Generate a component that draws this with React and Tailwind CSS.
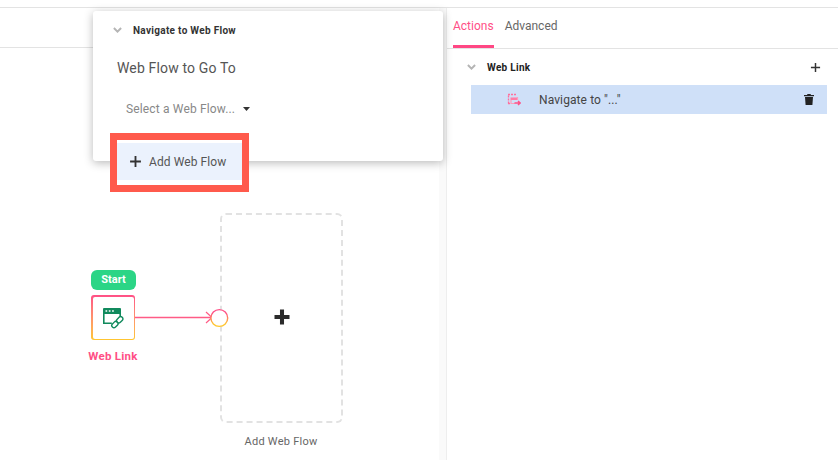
import React from "react";

const Chevron = ({ className }) => (
  <svg viewBox="0 0 10 6" className={className} fill="none" stroke="#b5b5b5" strokeWidth="2.2"><path d="M1 .8l4 4 4-4" /></svg>
);

const Plus = ({ size = 12, w = 2, color = "#333" }) => (
  <svg width={size} height={size} viewBox="0 0 12 12"><path d="M6 1v10M1 6h10" stroke={color} strokeWidth={w} fill="none" /></svg>
);

export default function App() {
  return (
    <div className="w-[838px] h-[460px] bg-white overflow-hidden flex flex-col text-[12px] text-[#555]" style={{ fontFamily: "Roboto, Arial, sans-serif" }}>
      <div className="h-[8px] shrink-0 border-b border-[#e3e3e3]" />
      <div className="flex flex-1 min-h-0">
        <div className="relative w-[439px] shrink-0">
          <div className="h-[40px] border-b border-[#e3e3e3]" />

          {/* popup */}
          <div className="absolute left-[93px] top-[3px] w-[350px] h-[150px] bg-white rounded-[3px] shadow-[0_2px_10px_rgba(0,0,0,0.28)] z-10">
            <div className="flex items-center h-[38px] pl-[20px]">
              <Chevron className="w-[9px] h-[6px]" />
              <span className="ml-[11px] font-bold text-[10px] text-[#333] tracking-[0.3px]">Navigate to Web Flow</span>
            </div>
            <div className="pl-[24px] mt-[9px] text-[14px] leading-[20px] text-[#555] tracking-[0.15px]">Web Flow to Go To</div>
            <div className="pl-[33px] mt-[21px] flex items-center text-[12px] leading-[20px] text-[#888] tracking-[0.15px]">
              Select a Web Flow...
              <svg width="7" height="4" viewBox="0 0 7 4" className="ml-[8px]"><path d="M0 0h7L3.5 4z" fill="#333" /></svg>
            </div>
          </div>

          {/* highlighted button */}
          <div className="absolute left-[110px] top-[125px] w-[139px] h-[59px] border-[7px] border-[#ff5a4c] bg-white z-20 pt-[3px]">
            <div className="h-[37px] bg-[#ebf2fd] flex items-center pl-[12px] text-[12px] text-[#555] tracking-[0.08px]">
              <Plus size={13} w={1.7} />
              <span className="ml-[7px]">Add Web Flow</span>
            </div>
          </div>

          {/* canvas nodes */}
          <div className="absolute left-[91px] top-[262px] w-[45px] h-[20px] rounded-[6px] bg-[#2bd586] text-white font-bold text-[11px] flex items-center justify-center">Start</div>
          <div className="absolute left-[91px] top-[287px] w-[44px] h-[45px] rounded-[3px] p-[1.5px] bg-gradient-to-b from-[#ff4f86] to-[#ffc62e]">
            <div className="w-full h-full bg-white rounded-[2px] flex items-center justify-center">
              <svg width="22" height="22" viewBox="0 0 22 22" fill="none">
                <path d="M1 2a1 1 0 0 1 1-1h16a1 1 0 0 1 1 1v5H1z" fill="#118a5d" />
                <path d="M1.8 6v10.2h8M18.2 6v4" stroke="#118a5d" strokeWidth="1.6" />
                <path d="M3.5 4h1.7M6.8 4h1.7M10.1 4h1.7" stroke="#fff" strokeWidth="1.6" />
                <g stroke="#118a5d" strokeWidth="1.4" fill="none">
                  <rect x="9.4" y="15.4" width="7" height="4.4" rx="2.2" transform="rotate(-45 12.9 17.6)" />
                  <rect x="14.2" y="10.6" width="7" height="4.4" rx="2.2" transform="rotate(-45 17.7 12.8)" />
                </g>
              </svg>
            </div>
          </div>
          <div className="absolute left-[73px] top-[340px] w-[80px] text-center font-bold text-[11.5px] leading-[17px] text-[#ff4f86] tracking-[0.25px]">Web Link</div>

          <svg className="absolute left-[135px] top-[300px] z-[1]" width="80" height="20" viewBox="0 0 80 20" fill="none">
            <path d="M0 9.5h76" stroke="#ff5c86" strokeWidth="1.6" />
            <path d="M71 4l6 5.5-6 5.5" stroke="#ff5c86" strokeWidth="1.2" />
          </svg>

          <div className="absolute left-[220px] top-[205px] w-[123px] h-[210px] rounded-[6px] border-2 border-dashed border-[#e2e2e2] flex items-center justify-center pb-[3px]">
            <Plus size={18} w={2.7} color="#2b2b2b" />
          </div>
          <svg className="absolute left-[209px] top-[300px] z-[2]" width="20" height="20" viewBox="0 0 20 20" fill="none">
            <defs>
              <linearGradient id="ring" x1="0" y1="0" x2="0" y2="1">
                <stop offset="0.2" stopColor="#ff4f86" />
                <stop offset="0.85" stopColor="#ffc62e" />
              </linearGradient>
            </defs>
            <circle cx="10.3" cy="10" r="8.4" fill="#fff" stroke="url(#ring)" strokeWidth="1.4" />
          </svg>
          <div className="absolute left-[201px] top-[425px] w-[160px] text-center text-[11px] leading-[18px] text-[#666] tracking-[0.25px]">Add Web Flow</div>
        </div>

        {/* divider gutter */}
        <div className="w-[8px] shrink-0 bg-[#fafafa] border-r border-[#eeeeee]" />

        {/* right panel */}
        <div className="flex-1 min-w-0">
          <div className="h-[41px] border-b border-[#e3e3e3] flex pl-[6px] gap-[11px]">
            <div className="relative h-[40px] pt-[10px] text-[12px] leading-[17px] text-[#ff4f86]">
              Actions
              <div className="absolute left-0 right-0 bottom-0 h-[3px] bg-[#ff4784]" />
            </div>
            <div className="pt-[10px] text-[12px] leading-[17px] text-[#666]">Advanced</div>
          </div>
          <div className="flex items-center h-[36px] pl-[20px] pr-[17px]">
            <Chevron className="w-[9px] h-[6px]" />
            <span className="ml-[11px] font-bold text-[10px] text-[#222] tracking-[0.3px]">Web Link</span>
            <span className="ml-auto"><Plus size={11} w={1.6} /></span>
          </div>
          <div className="ml-[24px] mr-[11px] h-[29px] bg-[#cfe0f8] flex items-center pl-[36px] pr-[13px]">
            <svg width="14" height="13" viewBox="0 0 14 13" fill="none">
              <path d="M1 1.5h9M1.5 2.5v8M1 10.5h3" stroke="#ff6f9d" strokeWidth="1.3" strokeDasharray="2 1" />
              <path d="M3.5 4.5h7v2.5h-7z" fill="#ff7da6" />
              <path d="M4 7v3.5h4M10.5 4v3" stroke="#ff9dbc" strokeWidth="1.2" />
              <path d="M7.5 10h5.5M11 8l2.2 2-2.2 2" stroke="#ff4f86" strokeWidth="1.4" />
            </svg>
            <span className="ml-[18px] text-[12px] text-[#444] tracking-[0.1px]">Navigate to "..."</span>
            <svg className="ml-auto" width="10" height="11" viewBox="0 0 10 11"><path d="M3.5 0h3l.5 1h3v1.3H0V1h3zM1 3h8l-.6 8H1.6z" fill="#222" /></svg>
          </div>
        </div>
      </div>
    </div>
  );
}
